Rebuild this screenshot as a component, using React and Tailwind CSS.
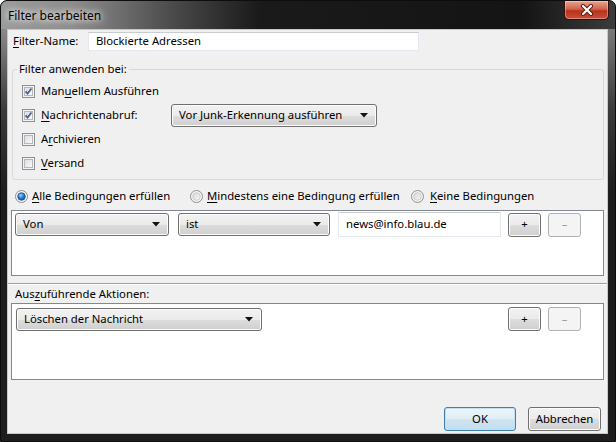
import React from "react";

const font = "font-['Noto_Sans','Open_Sans',sans-serif]";

const Arrow = () => (
  <svg width="8" height="5" viewBox="0 0 8 5" className="shrink-0">
    <polygon points="0,0 8,0 4,4.5" fill="#111" />
  </svg>
);

const Check = ({ checked }) => (
  <svg width="13" height="13" viewBox="0 0 13 13" className="shrink-0">
    <defs>
      <linearGradient id="cbg" x1="0" y1="0" x2="1" y2="1">
        <stop offset="0" stopColor="#d9dde2" />
        <stop offset="1" stopColor="#fbfbfb" />
      </linearGradient>
    </defs>
    <rect x="0.5" y="0.5" width="12" height="12" fill="#f4f4f4" stroke="#8e8f8f" />
    <rect x="2.5" y="2.5" width="8" height="8" fill="url(#cbg)" stroke="#b4b8bd" />
    {checked && (
      <path d="M3.6 6.4 L5.6 8.6 L9.4 3.6" fill="none" stroke="#4a5f8e" strokeWidth="1.7" />
    )}
  </svg>
);

const Radio = ({ on }) => (
  <svg width="13" height="13" viewBox="0 0 13 13" className="shrink-0">
    <defs>
      <radialGradient id="rOn" cx="0.4" cy="0.35" r="0.7">
        <stop offset="0" stopColor="#9fd3ff" />
        <stop offset="0.5" stopColor="#2f7fd0" />
        <stop offset="1" stopColor="#17458a" />
      </radialGradient>
      <linearGradient id="rOff" x1="0" y1="0" x2="1" y2="1">
        <stop offset="0" stopColor="#d5d8dc" />
        <stop offset="1" stopColor="#f6f6f6" />
      </linearGradient>
    </defs>
    <circle cx="6.5" cy="6.5" r="6" fill="#f4f4f4" stroke="#8e8f8f" />
    <circle cx="6.5" cy="6.5" r="3.8" fill={on ? "url(#rOn)" : "url(#rOff)"} stroke={on ? "#1d4f8f" : "#c0c3c7"} strokeWidth="0.8" />
  </svg>
);

const Combo = ({ w, children }) => (
  <div
    className={`${w} h-[23px] flex items-center justify-between pl-[7px] pr-[8px] border border-[#707070] rounded-[3px] bg-[linear-gradient(#f2f2f2,#ebebeb_50%,#dddddd_51%,#cfcfcf)] shadow-[inset_0_0_0_1px_#fcfcfc]`}
  >
    <span>{children}</span>
    <Arrow />
  </div>
);

const SmallBtn = ({ disabled, children }) => (
  <div
    className={
      disabled
        ? "w-[33px] h-[24px] flex items-center justify-center border border-[#adb2b5] rounded-[3px] bg-[#f4f4f4] text-[#9a9a9a]"
        : "w-[33px] h-[24px] flex items-center justify-center border border-[#707070] rounded-[3px] bg-[linear-gradient(#f2f2f2,#ebebeb_50%,#dddddd_51%,#cfcfcf)] shadow-[inset_0_0_0_1px_#fcfcfc]"
    }
  >
    {children}
  </div>
);

const U = ({ children }) => <span className="underline underline-offset-2">{children}</span>;

export default function App() {
  return (
    <div className={`${font} text-[11.3px] text-black w-[616px] h-[442px] flex flex-col border border-[#0d0d0d] rounded-t-[7px] overflow-hidden bg-[#1c1c1c]`}>
      {/* title bar */}
      <div className="h-[28px] flex items-start justify-between bg-[linear-gradient(90deg,#9c9c9c_0%,#8c8c8c_12%,#4a4a4a_28%,#1a1a1a_42%,#141414_85%,#3c3c3c_100%)]">
        <span className="mt-[6px] ml-[7px] text-[12px] [text-shadow:0_0_6px_#fff,0_0_10px_#fff]">Filter bearbeiten</span>
        <div className="mr-[6px] w-[45px] h-[19px] flex items-center justify-center rounded-b-[5px] border border-t-0 border-[#3a0f08] bg-[linear-gradient(#e8a493,#d0644a_45%,#b8321b_55%,#c9503a)] shadow-[inset_0_0_0_1px_rgba(255,255,255,0.35)]">
          <svg width="14" height="12" viewBox="0 0 14 12">
            <path d="M3 2 L11 10 M11 2 L3 10" stroke="#5a1a10" strokeWidth="4" strokeLinecap="round" />
            <path d="M3 2 L11 10 M11 2 L3 10" stroke="#fff" strokeWidth="2.2" strokeLinecap="round" />
          </svg>
        </div>
      </div>

      <div className="flex h-[405px]">
        <div className="w-[6px] bg-[linear-gradient(#8a8a8a,#3a3a3a_20%,#1e1e1e_40%,#1e1e1e)]" />

        {/* content */}
        <div className="w-[601px] flex flex-col bg-[#f0f0f0] border border-[#c8c8c8]">
          {/* filter name */}
          <div className="mt-[2px] h-[19px] flex items-center">
            <span className="ml-[5px] w-[75px]">
              <U>F</U>ilter-Name:
            </span>
            <div className="w-[331px] h-[19px] flex items-center pl-[7px] bg-white border border-[#e3e9ef] border-t-[#c9ccd1]">
              Blockierte Adressen
            </div>
          </div>

          {/* group box */}
          <div className="relative mt-[18px] ml-[4px] mr-[3px] h-[111px] border border-[#d5d9dd] rounded-[3px] pt-[9px] pl-[9px]">
            <span className="absolute -top-[9px] left-[4px] px-[2px] bg-[#f0f0f0]">Filter anwenden bei:</span>
            <div className="h-[24px] flex items-center gap-[6px]">
              <Check checked />
              <span>
                Man<U>u</U>ellem Ausführen
              </span>
            </div>
            <div className="h-[24px] flex items-center gap-[6px]">
              <Check checked />
              <span className="w-[124px]">
                <U>N</U>achrichtenabruf:
              </span>
              <Combo w="w-[206px]">Vor Junk-Erkennung ausführen</Combo>
            </div>
            <div className="h-[24px] flex items-center gap-[6px]">
              <Check />
              <span>
                A<U>r</U>chivieren
              </span>
            </div>
            <div className="h-[24px] flex items-center gap-[6px]">
              <Check />
              <span>
                <U>V</U>ersand
              </span>
            </div>
          </div>

          {/* radios */}
          <div className="mt-[6px] h-[20px] flex items-center ml-[7px]">
            <div className="w-[175px] flex items-center gap-[4px]">
              <Radio on />
              <span>
                <U>A</U>lle Bedingungen erfüllen
              </span>
            </div>
            <div className="w-[221px] flex items-center gap-[4px]">
              <Radio />
              <span>
                <U>M</U>indestens eine Bedingung erfüllen
              </span>
            </div>
            <div className="flex items-center gap-[6px]">
              <Radio />
              <span>
                <U>K</U>eine Bedingungen
              </span>
            </div>
          </div>

          {/* conditions list */}
          <div className="mt-[4px] ml-[3px] mr-[3px] h-[66px] bg-white border border-[#828790] pt-[1px] pl-[3px]">
            <div className="flex items-center">
              <Combo w="w-[154px]">Von</Combo>
              <div className="ml-[9px]">
                <Combo w="w-[152px]">ist</Combo>
              </div>
              <div className="ml-[8px] w-[163px] h-[25px] flex items-center pl-[7px] bg-white border border-[#e3e9ef] border-t-[#c9ccd1]">
                news@info.blau.de
              </div>
              <div className="ml-[7px]">
                <SmallBtn>+</SmallBtn>
              </div>
              <div className="ml-[7px]">
                <SmallBtn disabled>–</SmallBtn>
              </div>
            </div>
          </div>

          {/* splitter */}
          <div className="mt-[7px] h-[2px] border-t border-[#a0a0a0] border-b border-b-white" />

          <div className="mt-[1px] h-[16px] flex items-center ml-[7px]">
            Aus<U>z</U>uführende Aktionen:
          </div>

          {/* actions list */}
          <div className="mt-[1px] ml-[3px] mr-[3px] h-[77px] bg-white border border-[#828790] pt-[3px] pl-[4px] flex items-start">
            <div className="mt-[1px]">
              <Combo w="w-[246px]">Löschen der Nachricht</Combo>
            </div>
            <div className="ml-[246px]">
              <SmallBtn>+</SmallBtn>
            </div>
            <div className="ml-[7px]">
              <SmallBtn disabled>–</SmallBtn>
            </div>
          </div>

          {/* dialog buttons */}
          <div className="mt-[27px] flex justify-end gap-[12px] mr-[6px]">
            <div className="w-[72px] h-[24px] flex items-center justify-center border border-[#3c7fb1] rounded-[3px] bg-[linear-gradient(#edf5fa,#e1eef6_50%,#cfe5f2_51%,#c2dcee)] shadow-[inset_0_0_0_1px_#bfe0f6]">
              OK
            </div>
            <div className="w-[73px] h-[24px] flex items-center justify-center border border-[#707070] rounded-[3px] bg-[linear-gradient(#f2f2f2,#ebebeb_50%,#dddddd_51%,#cfcfcf)] shadow-[inset_0_0_0_1px_#fcfcfc]">
              Abbrechen
            </div>
          </div>
        </div>

        <div className="w-[7px] bg-[linear-gradient(#7a7a7a,#3a3a3a_20%,#1e1e1e_40%,#1e1e1e)]" />
      </div>

      <div className="h-[7px] bg-[#1e1e1e]" />
    </div>
  );
}
